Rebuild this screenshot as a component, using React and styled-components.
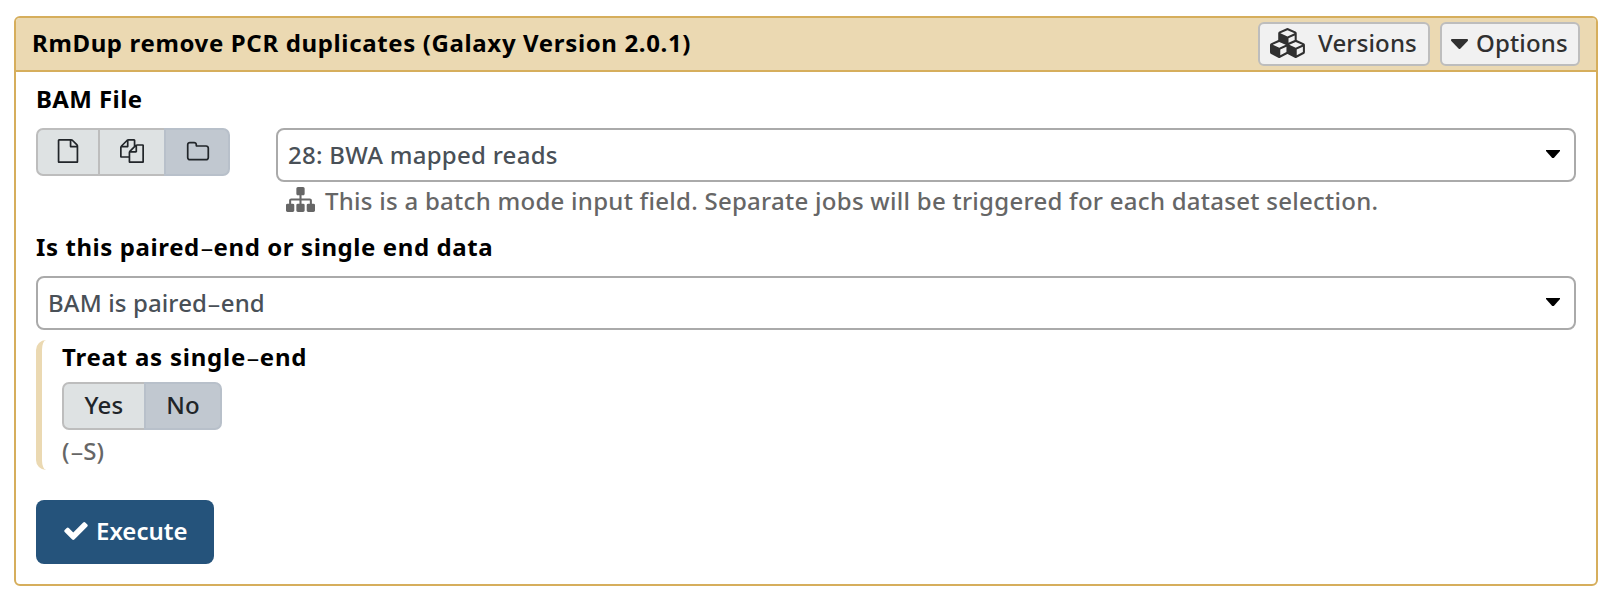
import React from "react";
import styled, { createGlobalStyle } from "styled-components";

const GlobalStyle = createGlobalStyle`
  *, *::before, *::after { box-sizing: border-box; }
  body {
    margin: 0;
    background: #fff;
    color: #000;
    font-family: "Noto Sans", "Open Sans", sans-serif;
    font-size: 24px;
    font-weight: 500;
    line-height: 36px;
  }
  button { font: inherit; margin: 0; }
`;

const Page = styled.main`
  padding: 16px 14px 14px;
`;

const Card = styled.section`
  height: 570px;
  border: 2px solid #d6ae5c;
  border-radius: 6px;
  background: #fff;
`;

const CardHeader = styled.header`
  display: flex;
  align-items: center;
  justify-content: space-between;
  height: 54px;
  padding: 0 16px;
  background: #ebd9b2;
  border-bottom: 2px solid #d6ae5c;
  border-radius: 4px 4px 0 0;
`;

const Title = styled.h1`
  margin: 0 0 2px;
  font-size: 24px;
  font-weight: 700;
  line-height: 36px;
  letter-spacing: 0.64px;
  white-space: nowrap;
`;

const HeaderActions = styled.div`
  display: flex;
  gap: 10px;
`;

const HeaderButton = styled.button`
  display: flex;
  align-items: center;
  width: ${(p) => p.$width};
  height: 44px;
  padding: 0 0 2px ${(p) => p.$inset};
  gap: ${(p) => p.$gap};
  border: 2px solid #bdbdbd;
  border-radius: 6px;
  background: #f1f1f1;
  color: #303030;
  letter-spacing: 0.15px;
  white-space: nowrap;
`;

const CardBody = styled.div`
  padding: 9px 20px 0;
`;

const Label = styled.div`
  font-weight: 700;
  letter-spacing: ${(p) => p.$tracking};
  white-space: nowrap;
`;

const Hyphen = styled.span`
  display: inline-block;
  margin: 0 3px;
  font-weight: 400;
  letter-spacing: 0;
  transform: scaleX(1.8);
`;

const InputRow = styled.div`
  display: flex;
  align-items: flex-start;
  gap: 46px;
  margin-top: 11px;
`;

const InputColumn = styled.div`
  flex: 1;
  min-width: 0;
`;

const ButtonGroup = styled.div`
  display: flex;
`;

const GroupButton = styled.button`
  display: flex;
  align-items: center;
  justify-content: center;
  width: ${(p) => p.$width};
  height: 48px;
  padding: 0 0 2px ${(p) => p.$inset || 0};
  border: 2px solid ${(p) => (p.$active ? "#b8c0ca" : "#bdbdbd")};
  background: ${(p) => (p.$active ? "#c1c8d0" : "#dee2e3")};
  color: #212529;
  letter-spacing: 0.2px;

  & + & { margin-left: -2px; }
  &:first-child { border-radius: 7px 0 0 7px; }
  &:last-child { border-radius: 0 7px 7px 0; }
`;

const SelectBox = styled.div`
  display: flex;
  align-items: center;
  justify-content: space-between;
  height: 54px;
  padding: 0 14px 0 10px;
  border: 2px solid #aaa;
  border-radius: 8px;
  background: #fff;
  color: #495057;
  letter-spacing: ${(p) => p.$tracking};
`;

const SelectArrow = styled.svg`
  display: block;
  width: 14px;
  height: 8px;
  margin-bottom: 3px;
  fill: #000;
`;

const Hint = styled.div`
  display: flex;
  align-items: center;
  gap: 10px;
  height: 38px;
  margin-bottom: -2px;
  padding-left: 10px;
  color: #666;
  letter-spacing: 0.27px;
  white-space: nowrap;
`;

const PairedField = styled.div`
  margin-top: 11px;
`;

const PairedSelect = styled.div`
  margin-top: 11px;
`;

const SubSection = styled.div`
  height: 130px;
  margin-top: 10px;
  padding-left: 20px;
  border-left: 6px solid #ebd9b2;
  border-radius: 10px;
`;

const SubLabel = styled(Label)`
  line-height: 34px;
`;

const ToggleRow = styled.div`
  margin-top: 8px;
`;

const HelpText = styled.div`
  margin-top: 3px;
  color: #666;
`;

const ExecuteButton = styled.button`
  display: flex;
  align-items: center;
  width: 178px;
  height: 64px;
  margin-top: 30px;
  padding: 0 0 2px 28px;
  gap: 8px;
  border: 0;
  border-radius: 8px;
  background: #25537b;
  color: #fff;
  font-weight: 600;
`;

const Glyph = styled.svg`
  display: block;
  flex: none;
  width: ${(p) => p.$w}px;
  height: ${(p) => p.$h}px;
  margin-top: ${(p) => p.$drop || 0}px;
  fill: currentColor;
`;

const CubesIcon = () => (
  <Glyph $w={37} $h={30} viewBox="0 0 2304 1792" preserveAspectRatio="none">
    <path d="M640 1632l384-192v-314l-384 164v342zm-64-454l404-173-404-173-404 173zm1088 454l384-192v-314l-384 164v342zm-64-454l404-173-404-173-404 173zm-448-293l384-165v-266l-384 164v267zm-64-379l441-189-441-189-441 189zm1088 518v416q0 36-19 67t-52 47l-448 224q-25 14-57 14t-57-14l-448-224q-4-2-7-4-2 2-7 4l-448 224q-25 14-57 14t-57-14l-448-224q-33-16-52-47t-19-67v-416q0-38 21.500-70t56.500-48l434-186v-400q0-38 21.500-70t56.500-48l448-192q23-10 50-10t50 10l448 192q35 16 56.500 48t21.500 70v400l434 186q36 16 57 48t21 70z" />
  </Glyph>
);

const CaretIcon = () => (
  <Glyph $w={17} $h={10} $drop={1} viewBox="384 640 1024 576" preserveAspectRatio="none">
    <path d="M1408 704q0 26-19 45l-448 448q-19 19-45 19t-45-19l-448-448q-19-19-19-45t19-45 45-19h896q26 0 45 19t19 45z" />
  </Glyph>
);

const FileIcon = () => (
  <Glyph $w={24} $h={24} viewBox="0 0 1792 1792">
    <path d="M1596 380q28 28 48 76t20 88v1152q0 40-28 68t-68 28h-1344q-40 0-68-28t-28-68v-1600q0-40 28-68t68-28h896q40 0 88 20t76 48zm-444-244v376h376q-10-29-22-41l-313-313q-12-12-41-22zm384 1528v-1024h-416q-40 0-68-28t-28-68v-416h-768v1536h1280z" />
  </Glyph>
);

const FilesIcon = () => (
  <Glyph $w={24} $h={24} viewBox="0 0 1792 1792">
    <path d="M1696 384q40 0 68 28t28 68v1216q0 40-28 68t-68 28h-960q-40 0-68-28t-28-68v-288h-544q-40 0-68-28t-28-68v-672q0-40 20-88t48-76l408-408q28-28 76-48t88-20h416q40 0 68 28t28 68v328q68-40 128-40h416zm-544 213l-299 299h299v-299zm-640-384l-299 299h299v-299zm196 647l316-316v-416h-384v416q0 40-28 68t-68 28h-416v640h512v-256q0-40 20-88t48-76zm956 804v-1152h-384v416q0 40-28 68t-68 28h-416v640h896z" />
  </Glyph>
);

const FolderIcon = () => (
  <Glyph $w={24} $h={24} $drop={1} viewBox="0 0 1792 1792">
    <path d="M1600 1312v-704q0-40-28-68t-68-28h-704q-40 0-68-28t-28-68v-64q0-40-28-68t-68-28h-320q-40 0-68 28t-28 68v960q0 40 28 68t68 28h1216q40 0 68-28t28-68zm128-704v704q0 92-66 158t-158 66h-1216q-92 0-158-66t-66-158v-960q0-92 66-158t158-66h320q92 0 158 66t66 158v32h672q92 0 158 66t66 158z" />
  </Glyph>
);

const SitemapIcon = () => (
  <Glyph $w={29} $h={29} $drop={-3} viewBox="0 0 1792 1792">
    <path d="M1792 1248v320q0 40-28 68t-68 28h-320q-40 0-68-28t-28-68v-320q0-40 28-68t68-28h96v-192h-512v192h96q40 0 68 28t28 68v320q0 40-28 68t-68 28h-320q-40 0-68-28t-28-68v-320q0-40 28-68t68-28h96v-192h-512v192h96q40 0 68 28t28 68v320q0 40-28 68t-68 28h-320q-40 0-68-28t-28-68v-320q0-40 28-68t68-28h96v-192q0-52 38-90t90-38h512v-192h-96q-40 0-68-28t-28-68v-320q0-40 28-68t68-28h320q40 0 68 28t28 68v320q0 40-28 68t-68 28h-96v192h512q52 0 90 38t38 90v192h96q40 0 68 28t28 68z" />
  </Glyph>
);

const CheckIcon = () => (
  <Glyph $w={24} $h={18} viewBox="121 334 1550 1188">
    <path d="M1671 566q0 40-28 68l-724 724-136 136q-28 28-68 28t-68-28l-136-136-362-362q-28-28-28-68t28-68l136-136q28-28 68-28t68 28l294 295 656-657q28-28 68-28t68 28l136 136q28 28 28 68z" />
  </Glyph>
);

function Select({ tracking, children }) {
  return (
    <SelectBox $tracking={tracking}>
      <span>{children}</span>
      <SelectArrow viewBox="0 0 14 8">
        <path d="M0 0h14v1L7.800 8H6.200L0 1z" />
      </SelectArrow>
    </SelectBox>
  );
}

export default function App() {
  return (
    <Page>
      <GlobalStyle />
      <Card>
        <CardHeader>
          <Title>RmDup remove PCR duplicates (Galaxy Version 2.0.1)</Title>
          <HeaderActions>
            <HeaderButton $width="172px" $gap="11px" $inset="10px">
              <CubesIcon />
              <span>Versions</span>
            </HeaderButton>
            <HeaderButton $width="140px" $gap="8px" $inset="9px">
              <CaretIcon />
              <span>Options</span>
            </HeaderButton>
          </HeaderActions>
        </CardHeader>
        <CardBody>
          <Label $tracking="0.4px">BAM File</Label>
          <InputRow>
            <ButtonGroup>
              <GroupButton $width="64px"><FileIcon /></GroupButton>
              <GroupButton $width="68px"><FilesIcon /></GroupButton>
              <GroupButton $width="66px" $inset="2px" $active><FolderIcon /></GroupButton>
            </ButtonGroup>
            <InputColumn>
              <Select tracking="0.27px">28: BWA mapped reads</Select>
              <Hint>
                <SitemapIcon />
                <span>This is a batch mode input field. Separate jobs will be triggered for each dataset selection.</span>
              </Hint>
            </InputColumn>
          </InputRow>
          <PairedField>
            <Label $tracking="0.59px">Is this paired<Hyphen>-</Hyphen>end or single end data</Label>
            <PairedSelect>
              <Select tracking="0.12px">BAM is paired<Hyphen>-</Hyphen>end</Select>
            </PairedSelect>
          </PairedField>
          <SubSection>
            <SubLabel $tracking="0.78px">Treat as single<Hyphen>-</Hyphen>end</SubLabel>
            <ToggleRow>
              <ButtonGroup>
                <GroupButton $width="84px">Yes</GroupButton>
                <GroupButton $width="78px" $active>No</GroupButton>
              </ButtonGroup>
            </ToggleRow>
            <HelpText>(<Hyphen>-</Hyphen>S)</HelpText>
          </SubSection>
          <ExecuteButton>
            <CheckIcon />
            <span>Execute</span>
          </ExecuteButton>
        </CardBody>
      </Card>
    </Page>
  );
}
